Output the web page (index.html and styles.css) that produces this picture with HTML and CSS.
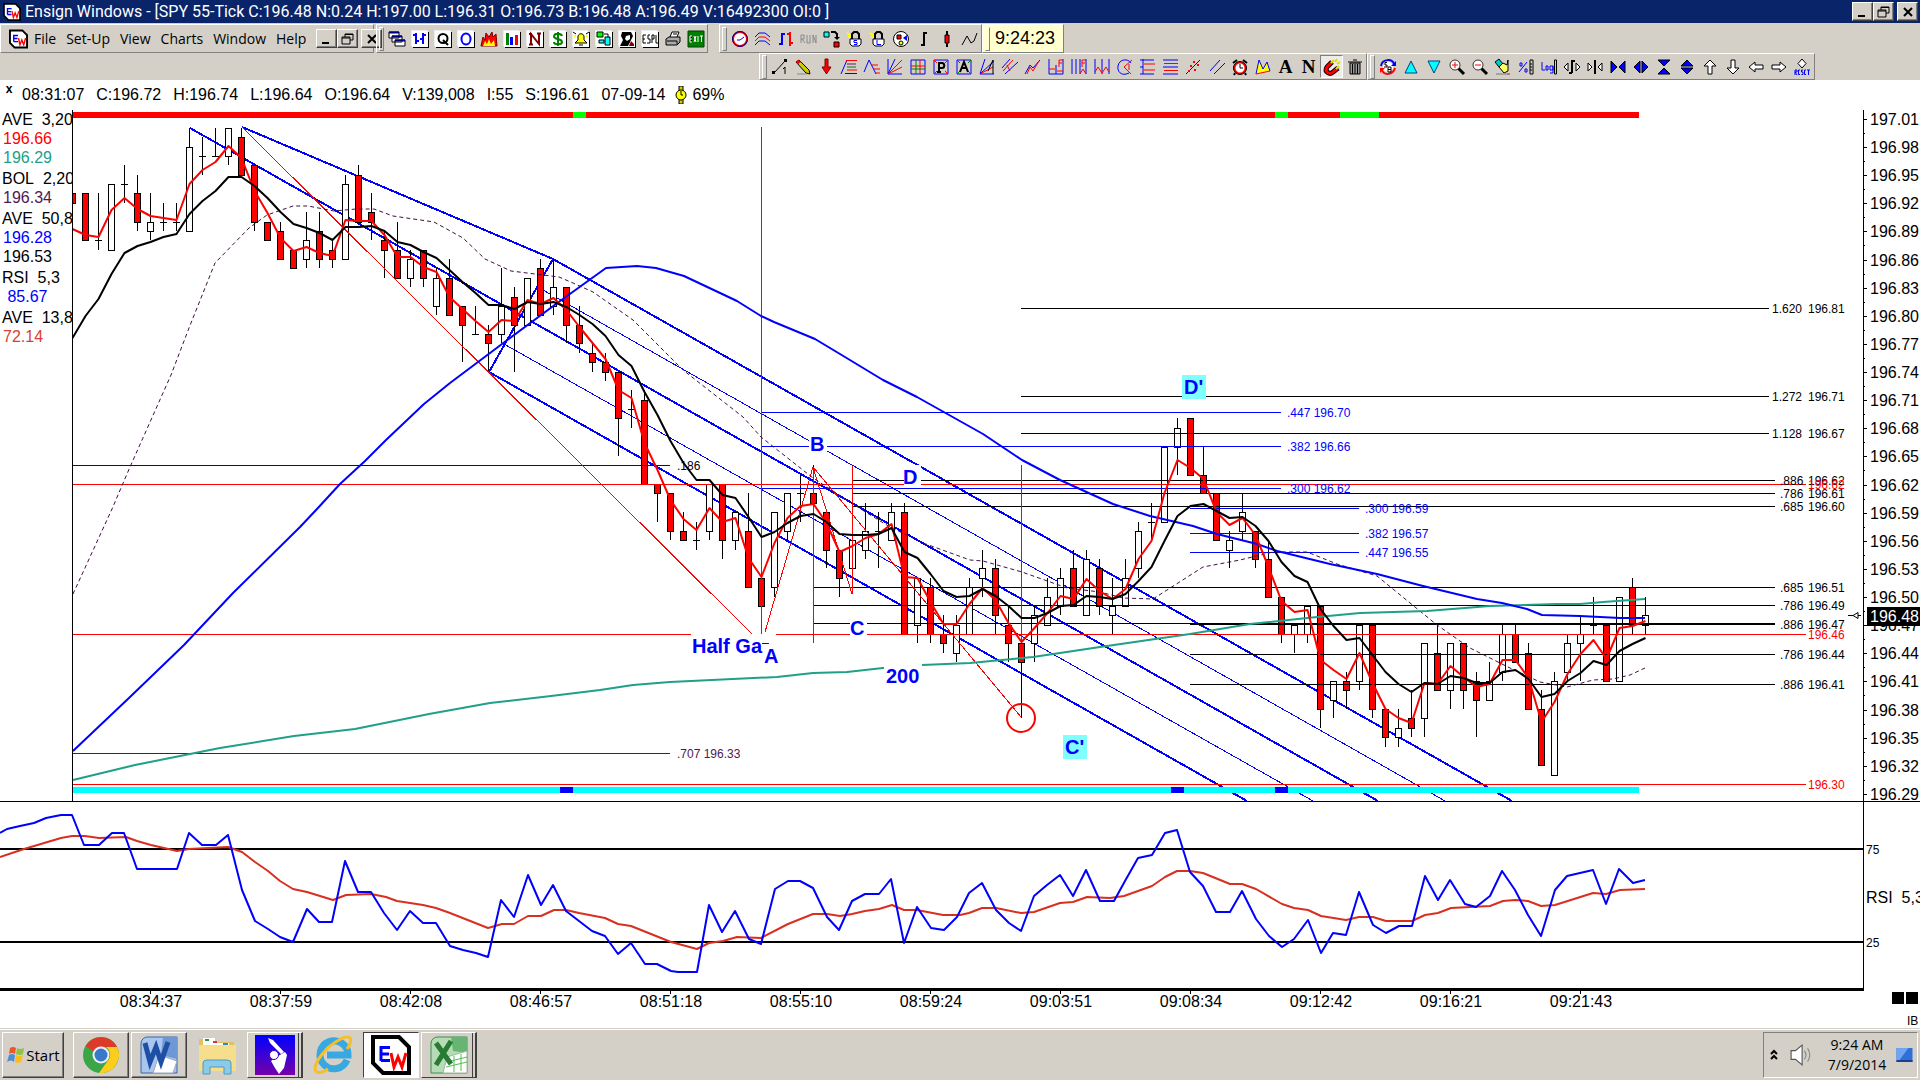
FILE: index.html
```html
<!DOCTYPE html>
<html lang="en">
<head>
<meta charset="utf-8">
<title>Ensign Windows</title>
<link rel="stylesheet" href="styles.css">
</head>
<body>
<svg class="defs" aria-hidden="true">
  <symbol id="ew" viewBox="0 0 40 40"><path d="M2 2H28L38 12V38H12L2 28Z" fill="#fff" stroke="#000" stroke-width="4"/><path d="M10 11V26M10 12.500H19M10 19H18M10 25.500H19" stroke="#00f" stroke-width="3" fill="none"/><path d="M20 18L23 32L27 22L31 32L35 18" stroke="#f00" stroke-width="3" fill="none"/></symbol>
</svg>

<header class="titlebar">
  <svg class="logo"><use href="#ew"/></svg>
  <h1>Ensign Windows - [SPY 55-Tick C:196.48 N:0.24 H:197.00 L:196.31 O:196.73 B:196.48 A:196.49 V:16492300 OI:0 ]</h1>
  <div class="winbtns">
    <button class="win" aria-label="Minimize"><svg viewBox="0 0 16 14"><path d="M3 11H10" class="k w2"/></svg></button>
    <button class="win" aria-label="Restore"><svg viewBox="0 0 16 14"><path d="M5 5V2H13V8H10M5 2.500H13M2 5H10V12H2ZM2 6H10" class="k"/></svg></button>
    <button class="win gap" aria-label="Close"><svg viewBox="0 0 16 14"><path d="M4 3L12 11M12 3L4 11" class="k w2"/></svg></button>
  </div>
</header>

<div class="bars">
  <div class="row top">
    <nav class="group menu">
      <svg class="logo"><use href="#ew"/></svg>
      <a href="#">File</a><a href="#">Set-Up</a><a href="#">View</a><a href="#">Charts</a><a href="#">Window</a><a href="#">Help</a>
      <div class="winbtns">
        <button class="win" aria-label="Minimize chart"><svg viewBox="0 0 16 14"><path d="M3 11H10" class="k w2"/></svg></button>
        <button class="win" aria-label="Restore chart"><svg viewBox="0 0 16 14"><path d="M5 5V2H13V8H10M5 2.500H13M2 5H10V12H2ZM2 6H10" class="k"/></svg></button>
        <button class="win gap" aria-label="Close chart"><svg viewBox="0 0 16 14"><path d="M4 3L12 11M12 3L4 11" class="k w2"/></svg></button>
      </div>
    </nav>
    <div class="group tools first">
      <button aria-label="Cascade"><svg viewBox="0 0 16 16"><path d="M0 1H10V7H0ZM3 5H13V11H3ZM6 9H16V15H6Z" fill="#fff" stroke="#000"/><path d="M0 1.500H10M3 5.500H13M6 9.500H16" stroke="#00007f" stroke-width="2"/></svg></button>
      <button class="tile" aria-label="Chart"><svg viewBox="0 0 16 16"><path d="M4 2V13M1 4H4M4 10H7M11 2V13M8 8H11M11 4H14" class="b w2"/></svg></button>
      <button class="tile" aria-label="Quote page"><svg viewBox="0 0 16 16"><circle cx="8" cy="7.500" r="4.500" class="k w2"/><path d="M8 9L13 14" class="k w2"/></svg></button>
      <button class="tile" aria-label="Option page"><svg viewBox="0 0 16 16"><ellipse cx="8" cy="8" rx="4.500" ry="5.500" class="b w2"/></svg></button>
      <button aria-label="Hot list"><svg viewBox="0 0 16 16"><path d="M0 15L2 6L4 9L5 2L8 6L11 1L12 6L15 3L16 15Z" fill="#f00" stroke="#7f0000"/><path d="M2 15L4 10L6 13L8 8L10 13L13 9L14 15Z" fill="#ff0"/></svg></button>
      <button class="tile" aria-label="Bars"><svg viewBox="0 0 16 16"><path d="M2 2H5V14H2Z" fill="#008000"/><path d="M6 6H9V14H6Z" fill="#00f"/><path d="M11 4H14V14H11Z" fill="#f00"/></svg></button>
      <button class="tile" aria-label="News"><svg viewBox="0 0 16 16"><path d="M4 14V3L12 13V2M2 3H5M10 2.500H14M2 13.500H6" stroke="#7f0000" stroke-width="2" fill="none"/></svg></button>
      <button class="tile" aria-label="Account"><svg viewBox="0 0 16 16"><path d="M12 5C11 2 4 2 4 5.500C4 9 12 7 12 11C12 14 4 14 4 11M8 1V15" stroke="#008000" stroke-width="2" fill="none"/></svg></button>
      <button class="tile" aria-label="Alerts"><svg viewBox="0 0 16 16"><path d="M2 12L5 9V5C6 2 10 2 11 5V9L14 12Z" fill="#ff0" stroke="#000"/><path d="M6 14H10M0 1L3 3M16 1L13 3" stroke="#000"/><path d="M1 5H3M13 5H15" stroke="#ff0" stroke-width="2"/></svg></button>
      <button class="tile" aria-label="Links"><svg viewBox="0 0 16 16"><path d="M1 1H7V6H1Z" fill="#0f0" stroke="#000"/><path d="M9 6H14V14H9ZM3 9H8V12H3Z" fill="#0ff" stroke="#000"/><path d="M8 3H12V6" class="k"/></svg></button>
      <button class="tile" aria-label="Support"><svg viewBox="0 0 16 16"><path d="M3 1H12L14 5L12 9L9 15H1L4 9L2 5Z" fill="#000"/><path d="M7 5L11 4L11 8L8 10L6 8Z" fill="#fff"/><path d="M10 15L12 10L15 13V15Z" fill="#800000"/></svg></button>
      <button class="tile" aria-label="ESPL"><svg viewBox="0 0 16 16"><path d="M4 4H1V12H4M1 8H3M8 4H6V8H8V12H5M10 12V4H12V8H10M14 4V12H16" class="k"/></svg></button>
      <button aria-label="Print"><svg viewBox="0 0 16 16"><path d="M5 6L7 1H14L12 6" fill="#fff" stroke="#000"/><path d="M1 8L4 6H15V11L12 14H1Z" fill="#aaa" stroke="#000"/><path d="M2 10H12V13M8 3H12" class="k"/></svg></button>
      <button aria-label="Exit"><svg viewBox="0 0 16 16"><path d="M0 0H16V16H0Z" fill="#008000" stroke="#004000"/><path d="M4 5H2V11H4M2 8H4M6 5L8 11M8 5L6 11M10 5V11M12 5H15M13.500 5V11" stroke="#fff"/></svg></button>
    </div>
    <div class="group tools second">
      <button aria-label="Session clock"><svg viewBox="0 0 16 16"><circle cx="8" cy="8" r="7" fill="#fff" stroke="#f00" stroke-width="2"/><circle cx="8" cy="8" r="7.500" class="dk"/><path d="M5 9H8L12 6" class="b"/></svg></button>
      <button aria-label="Bands"><svg viewBox="0 0 16 16"><path d="M0 6L4 2H10L15 6M0 14L4 10H10L15 14" class="b"/><path d="M0 10L4 6H10L15 10" class="r"/></svg></button>
      <button aria-label="Bars"><svg viewBox="0 0 16 16"><path d="M4 2V14M1 13H4M4 3H7" class="b w2"/><path d="M12 1V15M9 3H12M12 12H15" class="r w2"/></svg></button>
      <button aria-label="Run"><svg viewBox="0 0 16 16"><path d="M0 12V4H3V8H0M1 8L4 12M6 4V12H9V4M12 12V4L15 12V4" stroke="#888" fill="none"/></svg></button>
      <button aria-label="Swap"><svg viewBox="0 0 16 16"><path d="M0 1H5V6H0Z" fill="#0ff" stroke="#000"/><path d="M10 11H15V16H10Z" fill="#f00" stroke="#000"/><path d="M7 1H11L13 3V6" class="k w2"/><path d="M10 6H16L13 9Z"/></svg></button>
      <button aria-label="Lock S"><svg viewBox="0 0 16 16"><path d="M0 2L4 5M1 6H4" stroke="#ff0" stroke-width="2"/><path d="M5 8V3L7 1H10L12 3V8" class="k w2"/><path d="M3 8H14V13L12 15H5L3 13Z" fill="#fff" stroke="#000"/><path d="M10 9.500H7V11.500H10V13.500H7" class="b"/></svg></button>
      <button aria-label="Lock L"><svg viewBox="0 0 16 16"><path d="M0 2L4 5M1 6H4" stroke="#ff0" stroke-width="2"/><path d="M5 8V3L7 1H10L12 3V8" class="k w2"/><path d="M3 8H14V13L12 15H5L3 13Z" fill="#fff" stroke="#000"/><path d="M7 9V13.500H11" class="b"/></svg></button>
      <button aria-label="Shapes"><svg viewBox="0 0 16 16"><circle cx="8" cy="8" r="7.500" fill="#fff" stroke="#000"/><path d="M4 4H8V8H4Z" fill="#f00" stroke="#000"/><path d="M10 7L14 4V10Z" fill="#00f"/><circle cx="8" cy="12" r="2" fill="#ff0" stroke="#000"/></svg></button>
      <button aria-label="Bar style"><svg viewBox="0 0 16 16"><path d="M8 1V15M5 14H8M8 2H11" class="k w2"/></svg></button>
      <button aria-label="Candle style"><svg viewBox="0 0 16 16"><path d="M8 0V16" class="k w2"/><path d="M6 4H10V12H6Z" fill="#f00" stroke="#000"/></svg></button>
      <button aria-label="Line style"><svg viewBox="0 0 16 16"><path d="M0 14L5 5L9 12L12 10L15 2" class="k"/></svg></button>
    </div>
    <div class="group clock"><time>9:24:23</time></div>
  </div>
  <div class="row bottom">
    <div class="group tools draw">
      <button aria-label="Line"><svg viewBox="0 0 16 16"><path d="M2 14L13 2" class="k"/><path d="M0 12H3V15H0ZM12 0H15V3H12Z"/><path d="M11 10L13 8V15" class="k"/></svg></button>
      <button aria-label="Pencil"><svg viewBox="0 0 16 16"><path d="M1 3L4 1L14 11L15 15L11 14Z" fill="#cc0" stroke="#000"/><path d="M1 3L4 1L6 3L3 5Z" fill="#f00"/><path d="M2 15H12" stroke="#888"/></svg></button>
      <button aria-label="Arrow"><svg viewBox="0 0 16 16"><path d="M7 0H10V8H13L8.500 15L4 8H7Z" fill="#f00" stroke="#7f0000"/></svg></button>
      <button aria-label="Retracement"><svg viewBox="0 0 16 16"><path d="M0 15L6 1M4 14.500H16" class="b"/><path d="M5 1.500H16M6 11H16" class="r"/><path d="M6 5H15" stroke="#800080"/><path d="M6 8H15" stroke="#008000"/></svg></button>
      <button aria-label="Projection"><svg viewBox="0 0 16 16"><path d="M0 13L5 1L12 15" class="b"/><path d="M8 6H14M9 10H16M11 14H16" class="r"/></svg></button>
      <button aria-label="Fan"><svg viewBox="0 0 16 16"><path d="M1 0V15H15M1 15L8 0" class="b"/><path d="M1 15L15 1M1 15L15 8" class="r"/></svg></button>
      <button aria-label="Grid"><svg viewBox="0 0 16 16"><path d="M1 1H15V15H1Z" class="b"/><path d="M1 7H15M10 1V15" class="r"/><path d="M6 1V15M1 10H15" stroke="#008000"/></svg></button>
      <button aria-label="Pitchfork P"><svg viewBox="0 0 16 16"><path d="M1 1H15V15H1Z" class="b"/><path d="M1 1L4 4M12 12L15 15" class="r"/><path d="M15 1L12 4M1 15L4 12" stroke="#008000"/><path d="M6 13V4H9C12 4 12 9 9 9H6M4 13H8" class="k w2"/></svg></button>
      <button aria-label="Andrews A"><svg viewBox="0 0 16 16"><path d="M1 1H15V15H1Z" class="b"/><path d="M1 1L4 4M12 12L15 15" class="r"/><path d="M15 1L12 4M1 15L4 12" stroke="#008000"/><path d="M4 13L8 3L12 13M6 9H10" class="k w2"/></svg></button>
      <button aria-label="Gann"><svg viewBox="0 0 16 16"><path d="M1 15L6 0M1 15H15M1 15L15 2" class="b"/><path d="M1 15L14 8" class="r"/><path d="M9 12L14 1V15" class="k"/></svg></button>
      <button aria-label="Channels"><svg viewBox="0 0 16 16"><path d="M0 9L8 0M3 15L16 3" class="b"/><path d="M1 12L11 1M5 6L8 12" class="r"/></svg></button>
      <button aria-label="Zigzag"><svg viewBox="0 0 16 16"><path d="M0 15L5 6L8 9L15 1" class="b"/><path d="M2 15L5 8L8 12L14 2" class="r"/></svg></button>
      <button aria-label="Time F"><svg viewBox="0 0 16 16"><path d="M1 0V15M15 0V15M8 6V15M1 15H15" class="b"/><path d="M1 10H7M11 8V1H15M11 4H14M9 12H15" class="r"/></svg></button>
      <button aria-label="Cycles F"><svg viewBox="0 0 16 16"><path d="M1 0V15M5 0V15M9 0V15M15 0V15" class="b"/><path d="M11 8V1H15M11 4H14M9 15L12 10L15 15" class="r"/></svg></button>
      <button aria-label="Cycles"><svg viewBox="0 0 16 16"><path d="M1 0V15M8 0V15M15 0V15" class="b"/><path d="M1 13L4 8L8 14L12 8L15 13" class="r"/></svg></button>
      <button aria-label="Circle"><svg viewBox="0 0 16 16"><path d="M12 14C4 18 0 12 1 7C2 0 11 -1 14 4" class="b"/><path d="M15 1L7 8L14 15M12 5V11" class="r"/></svg></button>
      <button aria-label="Levels"><svg viewBox="0 0 16 16"><path d="M3 0V15M0 1H14M0 8H3M0 15H14" class="b"/><path d="M4 5H15M4 11H15" class="r"/></svg></button>
      <button aria-label="Horizontal lines"><svg viewBox="0 0 16 16"><path d="M0 1H15M0 8H15M0 15H15" class="b"/><path d="M1 4.500H15M1 11.500H15" class="r"/></svg></button>
      <button aria-label="Regression"><svg viewBox="0 0 16 16"><path d="M0 15L14 1" class="b"/><path d="M7 2H9V4H7ZM11 5H13V7H11ZM4 6H6V8H4ZM8 10H10V12H8ZM2 11H4V13H2Z" fill="#f00"/></svg></button>
      <button aria-label="Parallel"><svg viewBox="0 0 16 16"><path d="M1 12L11 1M5 15L16 4" class="b"/></svg></button>
      <button aria-label="Alarm"><svg viewBox="0 0 16 16"><path d="M1 4L5 1M15 4L11 1M3 14L2 16M13 14L14 16" class="k w2"/><circle cx="8" cy="9" r="5.500" fill="#fff" stroke="#f00" stroke-width="2"/><circle cx="8" cy="9" r="6.500" class="k"/><path d="M8 5V9H11" class="k"/></svg></button>
      <button aria-label="Pattern"><svg viewBox="0 0 16 16"><path d="M1 15L4 1L8 8L12 3L15 12Z" fill="#ff0"/><path d="M1 15L4 1L8 10L12 3L15 12" class="b"/><path d="M1 15L15 12" class="r"/></svg></button>
      <button class="letter" aria-label="Text">A</button>
      <button class="letter" aria-label="Note">N</button>
      <button class="pressed" aria-label="Magnet"><svg viewBox="0 0 16 16"><path d="M8 3L3 8C0 13 6 16 9 13L14 9" stroke="#000" stroke-width="5" fill="none"/><path d="M8 3L3 8C0 13 6 16 9 13L14 9" stroke="#f00" stroke-width="3" fill="none"/><path d="M10 1L7 4M15 7L12 10M13 0L11 3M16 3L13 5" stroke="#dd0" stroke-width="2"/></svg></button>
      <button aria-label="Trash"><svg viewBox="0 0 16 16"><path d="M3 4H13V15H3Z" fill="#999" stroke="#000"/><path d="M1 3H15M6 1H10M5.500 5V15M8 5V15M10.500 5V15" class="k"/></svg></button>
    </div>
    <div class="group tools view">
      <button aria-label="Swap symbols"><svg viewBox="0 0 16 16"><circle cx="8" cy="8" r="5" fill="#fff"/><path d="M1 7C2 0 12 -1 14 5" class="b w2"/><path d="M15 9C13 16 4 17 2 11" class="r w2"/><path d="M16 2V7H11Z" fill="#00f"/><path d="M0 14V9H5Z" fill="#f00"/><path d="M7 3.500H5V6H7V8H4M8 8V13H11V8ZM8 10.500H11" class="k"/></svg></button>
      <button aria-label="Up"><svg viewBox="0 0 16 16"><path d="M8 2L14 14H2Z" fill="#0ff" stroke="#004080"/></svg></button>
      <button aria-label="Down"><svg viewBox="0 0 16 16"><path d="M2 2H14L8 14Z" fill="#0ff" stroke="#004080"/></svg></button>
      <button aria-label="Zoom in"><svg viewBox="0 0 16 16"><path d="M9 9L15 15" class="k w3"/><circle cx="6" cy="6" r="5" fill="#fff" stroke="#333"/><path d="M3 6H9M6 3V9" class="r"/></svg></button>
      <button aria-label="Zoom out"><svg viewBox="0 0 16 16"><path d="M9 9L15 15" class="k w3"/><circle cx="6" cy="6" r="5" fill="#fff" stroke="#333"/><path d="M3 6H9" class="r"/></svg></button>
      <button aria-label="Clean"><svg viewBox="0 0 16 16"><path d="M0 3L4 0L8 5L4 8Z" fill="#0cc" stroke="#000"/><path d="M4 8L8 4L12 6L13 1V12L9 14Z" fill="#ff6" stroke="#000"/><path d="M1 15H12" stroke="#777"/><path d="M12 15H15" class="r"/></svg></button>
      <button aria-label="Percent scale"><svg viewBox="0 0 16 16"><path d="M1 13L9 3M2 4H4V7H2ZM7 10H9V13H7Z" class="b"/><path d="M12 1H15V15H12ZM12 5H14M12 8H14M12 11H14" class="k"/></svg></button>
      <button aria-label="Log scale"><svg viewBox="0 0 16 16"><path d="M1 3V11H4M5 7H7V11H5ZM12 7H9V11H12ZM12 7V14H9" class="b"/><path d="M13.500 1H15.500V15H13.500Z" class="k"/></svg></button>
      <button aria-label="Wider bars"><svg viewBox="0 0 16 16"><path d="M4 4V12L0 8ZM12 4V12L16 8Z" fill="#fff" stroke="#000"/><path d="M8 1V14M5 14H8M8 2H11" class="k w2"/></svg></button>
      <button aria-label="Narrower bars"><svg viewBox="0 0 16 16"><path d="M1 4V12L5 8ZM15 4V12L11 8Z" fill="#fff" stroke="#000"/><path d="M8 1V15" class="k w2"/></svg></button>
      <button aria-label="Compress"><svg viewBox="0 0 16 16"><path d="M1 2V14L7 8ZM15 2V14L9 8Z" fill="#00f" stroke="#000"/></svg></button>
      <button aria-label="Expand"><svg viewBox="0 0 16 16"><path d="M7 2V14L1 8ZM9 2V14L15 8Z" fill="#00f" stroke="#000"/></svg></button>
      <button aria-label="Compress vertical"><svg viewBox="0 0 16 16"><path d="M2 1H14L8 7ZM2 15H14L8 9Z" fill="#00f" stroke="#000"/></svg></button>
      <button aria-label="Expand vertical"><svg viewBox="0 0 16 16"><path d="M2 7H14L8 1ZM2 9H14L8 15Z" fill="#00f" stroke="#000"/></svg></button>
      <button aria-label="Shift up"><svg viewBox="0 0 16 16"><path d="M8 1L14 7H10V15H6V7H2Z" fill="#fff" stroke="#000"/></svg></button>
      <button aria-label="Shift down"><svg viewBox="0 0 16 16"><path d="M8 15L14 9H10V1H6V9H2Z" fill="#fff" stroke="#000"/></svg></button>
      <button aria-label="Shift left"><svg viewBox="0 0 16 16"><path d="M1 8L7 3V6H15V10H7V13Z" fill="#fff" stroke="#000"/></svg></button>
      <button aria-label="Shift right"><svg viewBox="0 0 16 16"><path d="M15 8L9 3V6H1V10H9V13Z" fill="#fff" stroke="#000"/></svg></button>
      <button aria-label="Reset"><svg viewBox="0 0 16 16"><path d="M8 0L12 4.500L8 9L4 4.500Z" fill="#fff" stroke="#000"/><path d="M1 16V11H3V13H1L3 16M6 11H4.500V15.500H6M9 11H7.500V13H9V15.500H7.500M12 11H10.500V15.500H12M13 11H16M14.500 11V16" class="b"/></svg></button>
    </div>
  </div>
</div>

<main>
  <div class="info">
    <button class="close" aria-label="Close panel">x</button>
    <span>08:31:07</span><span>C:196.72</span><span>H:196.74</span><span>L:196.64</span><span>O:196.64</span><span>V:139,008</span><span>I:55</span><span>S:196.61</span><span>07-09-14</span>
    <svg class="watch" viewBox="0 0 12 18"><path d="M4 0H8V18H4Z" fill="#cc0" stroke="#000"/><circle cx="6" cy="9" r="5" fill="#ff0" stroke="#000"/><path d="M6 5V9H8" class="k"/></svg>
    <span class="pct">69%</span>
  </div>
  <section class="price">
    <dl class="legend">
      <div><dt>AVE&nbsp; 3,20</dt><dd class="red">196.66</dd><dd class="teal">196.29</dd></div>
      <div><dt>BOL&nbsp; 2,20</dt><dd class="plum">196.34</dd></div>
      <div><dt>AVE&nbsp; 50,8</dt><dd class="blue">196.28</dd><dd>196.53</dd></div>
      <div><dt>RSI&nbsp; 5,3</dt><dd class="blue">&nbsp;85.67</dd></div>
      <div><dt>AVE&nbsp; 13,8</dt><dd class="rust">72.14</dd></div>
    </dl>
    <svg id="price" class="plot" viewBox="72 110 1848 691" role="img" aria-label="SPY 55-tick price chart"></svg>
  </section>
  <svg id="rsi" class="plot" viewBox="0 801 1920 227" role="img" aria-label="RSI chart"></svg>
</main>

<footer class="taskbar">
  <button class="start"><svg viewBox="0 0 20 20"><path d="M4 3Q7 1 10 3L9 9Q6 7 3 9Z" fill="#f0542c"/><path d="M11 3Q14 5 18 3L17 9Q13 11 10 9Z" fill="#8cc63f"/><path d="M3 10Q6 8 9 10L8 17Q5 14 1 17Z" fill="#4a90d9"/><path d="M10 10Q13 12 17 10L15 17Q12 19 9 17Z" fill="#fbbc1f"/></svg>Start</button>
  <button class="task raised" aria-label="Chrome"><svg viewBox="0 0 40 40"><circle cx="20" cy="20" r="18" fill="#3aa648"/><path d="M4.500 11A18 18 0 0 1 36 12H20A9 9 0 0 0 12 16Z" fill="#dd3a2a"/><path d="M36 12A18 18 0 0 1 18 38L28 24A9 9 0 0 0 25 12Z" fill="#fccd1a"/><circle cx="20" cy="20" r="8.500" fill="#eef"/><circle cx="20" cy="20" r="6.500" fill="#3a78c9"/></svg></button>
  <button class="task raised" aria-label="Word"><svg viewBox="0 0 40 40"><path d="M2 8Q3 2 9 2H38V38H2Z" fill="#a9c6ee" stroke="#3b67aa"/><path d="M24 2H38V24L22 20Z" fill="#6e97d6"/><path d="M20 20L38 26L34 38H14Z" fill="#fff" stroke="#9ab"/><path d="M6 8L11 27L17 12L22 27L29 7" stroke="#1f4fa5" stroke-width="5" fill="none"/></svg></button>
  <button class="task" aria-label="Explorer"><svg viewBox="0 0 40 40"><path d="M2 4H14L16 7H37V36H2Z" fill="#e2c25c"/><path d="M6 3H18V8H32V12H6Z" fill="#fff"/><path d="M2 10H39V36H2Z" fill="#f5df8c"/><path d="M8 4H12V6H8Z" fill="#2a9a3a"/><path d="M16 6H20V8H16Z" fill="#d33"/><path d="M26 8H31V10H26Z" fill="#38c"/><path d="M6 39V28Q6 25 10 25H30Q34 25 34 28V39H27V32H13V39Z" fill="#8ccbe8" stroke="#4a9cc4"/></svg></button>
  <button class="task raised stack" aria-label="Wizard"><svg viewBox="0 0 40 40"><defs><linearGradient id="vio" x2="0" y2="1"><stop stop-color="#00f"/><stop offset="1" stop-color="#70a"/></linearGradient></defs><path d="M0 0H40V40H0Z" fill="url(#vio)"/><path d="M13 3L18 5L29 17L26 19L15 8ZM16 26L23 21L30 17L32 20L29 33L24 39L20 33Z" fill="#fff"/><circle cx="19" cy="20" r="4.500" fill="#fff" stroke="#30c"/></svg></button>
  <button class="task" aria-label="Internet Explorer"><svg viewBox="0 0 40 40"><path d="M34 25A14 14 0 1 1 35 20H14" stroke="#38a9e0" stroke-width="7" fill="none"/><path d="M34 14C42 2 36 -1 26 5C14 11 2 26 2 34C3 41 12 36 15 34" stroke="#f6bf26" stroke-width="3" fill="none"/></svg></button>
  <button class="task active" aria-label="Ensign"><svg><use href="#ew"/></svg></button>
  <button class="task raised stack" aria-label="Excel"><svg viewBox="0 0 40 40"><path d="M2 8Q3 2 9 2H38V38H2Z" fill="#b5dcb5" stroke="#3d8f4d"/><path d="M22 2H38V18L24 16Z" fill="#67b572"/><path d="M18 22L38 16V38H14Z" fill="#fff" stroke="#9b9"/><path d="M18 27L38 22M17 32L38 27M25 21V37M32 19V36" stroke="#5b5"/><path d="M7 8L22 29M22 6L7 30" stroke="#287a35" stroke-width="5"/></svg></button>
  <div class="tray">
    <button class="chev" aria-label="Show hidden icons"><svg viewBox="0 0 8 12"><path d="M1 5L4 2L7 5M1 10L4 7L7 10" class="k w2"/></svg></button>
    <svg class="spk" viewBox="0 0 20 20"><path d="M1 6H5L11 1V19L5 14H1Z" fill="#fff" stroke="#555"/><path d="M13 6Q16 10 13 14M16 4Q20 10 16 16" fill="none" stroke="#888"/></svg>
    <time>9:24 AM<br>7/9/2014</time>
    <svg class="desk" viewBox="0 0 16 16"><path d="M0 1H16V15H0Z" fill="#2f6fd8"/><path d="M0 1H12L3 13H0Z" fill="#6ea4f0"/><path d="M0 13H16V15H0Z" fill="#1c3f90"/></svg>
  </div>
</footer>
<script src="chart.js"></script>
</body>
</html>
```
FILE: styles.css
```css
* { box-sizing: border-box; }
body {
  margin: 0;
  min-height: 100vh;
  display: flex;
  flex-direction: column;
  background: #fff;
  color: #000;
  font-family: "Liberation Sans", Arial, sans-serif;
  font-size: 16px;
  overflow-x: hidden;
}
h1, dl, dd { margin: 0; font-weight: normal; }
button { font: inherit; color: inherit; margin: 0; padding: 0; border: 0; background: none; }
.defs { position: absolute; width: 0; height: 0; }
.k, .b, .r, .dk { fill: none; stroke: #000; }
.b { stroke: #00f; }
.r { stroke: #f00; }
.dk { stroke: #00007f; }
.w2 { stroke-width: 2; }
.w3 { stroke-width: 3; }

.titlebar {
  display: flex;
  align-items: center;
  height: 23px;
  padding: 0 2px 0 3px;
  background: #0a246a;
  color: #fff;
}
.titlebar h1 { margin-left: 4px; flex: 1; font: 16px/22px Roboto, sans-serif; white-space: nowrap; }
.logo { width: 18px; height: 20px; flex: none; }
.winbtns { display: flex; align-items: center; flex: none; }
.win {
  display: flex;
  align-items: center;
  justify-content: center;
  width: 21px;
  height: 19px;
  background: #d4d0c8;
  border: 1px solid;
  border-color: #fff #404040 #404040 #fff;
  box-shadow: inset -1px -1px #808080;
}
.win svg { width: 16px; height: 14px; }
.win.gap { margin-left: 3px; }

.bars { background: #d4d0c8; height: 57px; }
.row { display: flex; }
.top { height: 30px; padding-top: 1px; }
.bottom { height: 27px; justify-content: flex-end; padding-right: 105px; }
.group {
  display: flex;
  flex: none;
  align-items: center;
  border: 1px solid;
  border-color: #fff #808080 #808080 #fff;
}
.menu { width: 374px; gap: 10px; padding-left: 8px; font: 14px/20px "Open Sans", sans-serif; white-space: nowrap; }
.menu a { color: #000; text-decoration: none; }
.menu .logo { height: 20px; width: 19px; margin-right: -4px; }
.menu .winbtns { margin-left: auto; }
.tools::before, .clock::before {
  content: "";
  width: 3px;
  height: 22px;
  margin: 0 1px 0 2px;
  border: 1px solid;
  border-color: #fff #808080 #808080 #fff;
}
.clock::before { margin-right: 5px; }
.tools button { width: 23px; height: 23px; display: flex; align-items: center; justify-content: center; }
.tools svg { width: 16px; height: 16px; overflow: visible; }
.first { margin-left: 2px; width: 332px; }
.second { margin-left: 11px; width: 263px; }
.tile svg { background: #fff; box-shadow: 1px 1px #000, -1px -1px #eee; }
.clock { width: 82px; background: #ffffd0; font-size: 18px; }
.draw { width: 608px; }
.view { width: 448px; }
.tools .letter { font: bold 19px/20px "Liberation Serif", serif; }
.tools .pressed { background: #eeece8; border: 1px solid; border-color: #808080 #fff #fff #808080; }

main { flex: 1; }
.info { display: flex; align-items: center; height: 30px; gap: 12px; line-height: 30px; }
.close { width: 10px; margin: 0 0 12px 4px; font: bold 12px/12px "Liberation Sans", sans-serif; }
.info .close + span { margin-left: -4px; }
.watch { width: 12px; height: 18px; margin-left: -2px; }
.pct { margin-left: -7px; }
.price { display: flex; align-items: flex-start; }
.legend { width: 72px; flex: none; overflow: hidden; line-height: 19px; padding-left: 2px; white-space: nowrap; }
.legend div { margin-bottom: 2px; }
.legend dd { padding-left: 1px; }
.red { color: #f00; }
.teal { color: #20a088; }
.plum { color: #501850; }
.blue { color: #00f; }
.rust { color: #d84030; }
.plot { display: block; flex: 1; min-width: 0; width: 100%; }
.plot .px { shape-rendering: crispEdges; }
.plot text { font-size: 16px; }
.plot .sm { font-size: 12px; }
.plot .tag { font-size: 20px; font-weight: bold; fill: #00f; }
.plot .mid { text-anchor: middle; }
.plot polyline { fill: none; stroke-width: 2; stroke-linejoin: round; }

.taskbar {
  display: flex;
  align-items: center;
  height: 52px;
  padding: 0 2px;
  background: #d4d0c8;
  border-top: 1px solid #d4d0c8;
  box-shadow: inset 0 1px #fff;
}
.start, .task { height: 46px; display: flex; align-items: center; justify-content: center; }
.start, .raised {
  border: 1px solid;
  border-color: #fff #404040 #404040 #fff;
  box-shadow: inset -1px -1px #808080;
}
.start { width: 62px; margin-right: 9px; font: 15px/20px "Open Sans", sans-serif; }
.start svg { width: 20px; height: 22px; }
.task { width: 56px; margin-right: 2px; }
.task svg { width: 40px; height: 40px; }
.active { background: #fff; border: 1px solid; border-color: #404040 #fff #fff #404040; }
.stack { border-right: 2px solid #404040; box-shadow: inset -2px 0 #d4d0c8, inset -3px 0 #404040; }
.tray {
  display: flex;
  align-items: center;
  width: 155px;
  height: 46px;
  margin-left: auto;
  padding-left: 6px;
  border: 1px solid;
  border-color: #808080 #fff #fff #808080;
}
.tray time { width: 72px; margin-left: 9px; text-align: center; font: 14px/20px "Open Sans", sans-serif; }
.chev svg { width: 8px; height: 12px; display: block; }
.spk { width: 22px; height: 22px; margin-left: 12px; }
.desk { width: 17px; height: 16px; margin-left: 3px; }
```
FILE: chart.js
```js
const NS = 'http://www.w3.org/2000/svg';
const priceSvg = document.getElementById('price');
const rsiSvg = document.getElementById('rsi');

function add(svg, name, attrs, text) {
  const el = document.createElementNS(NS, name);
  for (const key in attrs) el.setAttribute(key, attrs[key]);
  if (text) el.textContent = text;
  svg.appendChild(el);
}
const barX = i => 72 + 13 * i;
const centY = c => 484.5 - (c - 62) * 9.375;
const rule = (svg, x1, x2, y, stroke, w = 1) =>
  add(svg, 'line', { x1, x2, y1: y + 0.5, y2: y + 0.5, stroke, 'stroke-width': w, class: 'px' });
const vert = (svg, x, y1, y2, stroke) =>
  add(svg, 'line', { x1: x + 0.5, x2: x + 0.5, y1, y2, stroke, class: 'px' });
const seg = (x1, y1, x2, y2, stroke, w = 1) =>
  add(priceSvg, 'line', { x1, y1, x2, y2, stroke, 'stroke-width': w, class: 'px' });
const box = (svg, x, y, width, height, fill) =>
  add(svg, 'rect', { x, y, width, height, fill, class: 'px' });
const poly = (svg, pts, stroke, extra) =>
  add(svg, 'polyline', Object.assign({ points: pts, stroke }, extra));
const byBar = ys => ys.map((y, i) => barX(i) + 0.5 + ',' + y).join(' ');

// trend channels
const B = '#00f', K = '#000', R = '#f00';
seg(190, 128, 1378, 801, B, 2);
seg(242, 127, 553, 259, B, 2);
seg(553, 259, 1512, 801, B, 2);
seg(489, 372, 1247, 801, B, 2);
seg(489, 372, 553, 259, B, 2);
seg(504, 344, 1313, 801, B);
seg(543, 290, 1445, 801, B);

// candles: colour, body top, body bottom, high, low (cents above 196)
const candles = `R 93 92 93 92|R 93 88 93 88|D 88 88 93 87|W 94 87 94 87|D 94 94 96 92|R 93 90 95 89|W 90 89 93 88|D 90 90 92 89|D 90 90 92 89|W 98 89 100 89
D 97 97 99 95|D 97 97 100 97|W 100 97 100 96|R 99 95 100 95|R 96 90 96 89|R 90 88 90 88|R 89 86 90 86|R 87 85 87 85|W 88 86 91 85|R 89 86 91 85
R 87 86 88 85|W 94 86 95 86|R 95 90 96 90|R 91 90 93 88|R 88 87 89 84|R 87 84 90 84|W 86 84 87 83|R 87 84 87 83|W 84 81 85 80|R 84 80 86 80
R 81 79 81 75|D 78 78 81 78|R 78 77 79 74|W 81 78 85 77|R 82 79 83 74|W 84 79 84 79|R 85 80 86 80|W 83 81 86 80|R 83 79 83 77|R 79 77 81 76
R 76 75 77 74|R 75 74 76 73|R 74 69 74 65|D 70 70 72 68|R 71 62 72 62|R 62 61 62 58|R 61 57 61 56|R 57 56 59 56|D 56 56 58 55|W 62 57 62 56
R 62 56 62 54|W 59 56 59 55|R 57 51 61 51|R 52 49 53 46|W 59 51 59 50|W 61 57 61 56|D 61 61 63 58|R 61 60 64 59|R 59 55 59 53|R 55 52 55 50
W 56 53 58 52|W 57 55 60 54|D 57 57 59 53|W 59 56 60 56|R 59 46 60 46|W 52 47 52 45|R 51 46 52 45|R 46 45 48 44|W 47 44 48 43|W 51 46 52 46
W 53 52 55 50|R 53 48 54 46|R 47 45 49 43|R 45 43 46 37|W 48 45 49 43|W 50 47 52 47|W 52 49 53 48|R 53 49 55 49|W 54 48 55 48|R 53 49 54 48
W 49 48 52 46|W 52 49 54 49|W 57 53 58 52|D 58 58 60 56|W 66 58 66 58|W 68 66 69 63|R 69 63 69 63|R 63 61 66 61|R 61 56 61 56|W 56 55 57 53
W 59 57 61 56|R 57 54 57 53|R 54 50 56 50|R 50 46 50 45|W 47 46 47 44|W 49 46 49 45|R 49 38 49 36|W 41 39 41 37|R 41 40 42 38|W 47 41 47 40
R 47 38 47 37|R 38 35 38 34|W 36 35 38 34|R 37 36 40 35|W 45 37 45 35|R 44 40 47 40|W 45 40 45 38|R 45 40 45 38|R 41 39 42 35|W 41 39 43 39
W 46 42 47 41|R 46 43 47 43|R 44 38 45 38|R 38 32 40 32|W 41 31 42 31|W 45 42 46 41|W 46 45 48 41|D 47 47 50 46|R 47 41 47 41|W 50 41 50 41
R 51 47 52 46|W 48 47 50 46`.split(/[|\n]/);
candles.forEach((row, i) => {
  const [kind, ...n] = row.split(' ');
  const [top, bottom, high, low] = n.map(v => Math.round(centY(+v) - 0.5));
  const x = barX(i);
  vert(priceSvg, x, high, low, K);
  if (kind === 'D') rule(priceSvg, x - 3, x + 4, top, K);
  else add(priceSvg, 'rect', { x: x - 2.5, y: top + 0.5, width: 6, height: bottom - top, fill: kind === 'R' ? R : '#fff', stroke: K, class: 'px' });
});

// horizontal levels
[484, 634, 784].forEach(y => rule(priceSvg, 73, 1806, y, R));
rule(priceSvg, 73, 670, 465, '#201020');
rule(priceSvg, 73, 670, 753, '#501850');
[412, 446, 488].forEach(y => rule(priceSvg, 762, 1281, y, B));
[508, 533, 552].forEach(y => rule(priceSvg, 1190, 1359, y, B));
[308, 396, 433].forEach(y => rule(priceSvg, 1021, 1769, y, K));
[480, 493, 506].forEach(y => rule(priceSvg, 852, 1775, y, K));
[587, 605, 623].forEach(y => rule(priceSvg, 813, 1775, y, K));
[624, 654, 684].forEach(y => rule(priceSvg, 1190, 1775, y, K));

// pattern legs
vert(priceSvg, 761, 127, 634, R);
vert(priceSvg, 813, 467, 643, R);
vert(priceSvg, 852, 466, 594, R);
vert(priceSvg, 1021, 465, 642, R);
seg(242, 127, 761, 643, R);
seg(765, 632, 813, 467, R);
seg(813, 467, 852, 594, R);
seg(813, 467, 1021, 717, R);
add(priceSvg, 'circle', { cx: 1021, cy: 718, r: 14, fill: 'none', stroke: R, 'stroke-width': 2 });

// indicators
poly(priceSvg, '73,594 112,509 130,467 171,375 189,328 215,263 249,228 267,215 293,206 308,206 334,211 356,209 374,209 393,216 434,222 463,238 485,259 511,271 559,277 573,283 593,292 633,320 683,370 743,417 761,437 813,478 867,513 890,527 923,543 970,560 983,561 1022,572 1067,588 1100,592 1123,598 1153,599 1203,567 1240,560 1273,552 1307,552 1337,564 1377,576 1437,625 1470,648 1510,668 1540,682 1567,687 1593,680 1613,679 1630,675 1645,668', '#401040', { 'stroke-dasharray': '4 3', style: 'stroke-width:1' });
poly(priceSvg, '73,780 135,765 220,748 294,736 355,729 429,714 490,703 551,696 600,690 633,685 670,682 777,677 813,673 847,672 883,668 922,665 970,663 1033,657 1060,653 1100,647 1190,634 1250,624 1307,618 1360,613 1427,611 1490,606 1557,604 1580,604 1603,602 1645,599', '#20a088');
poly(priceSvg, '73,751 130,697 184,645 233,593 300,527 317,509 340,484 365,461 386,440 424,404 450,383 502,344 556,304 606,268 637,266 656,268 684,276 737,301 761,316 774,322 815,339 840,354 883,380 917,397 983,434 1022,460 1060,480 1113,504 1150,516 1193,526 1217,534 1257,544 1277,551 1330,564 1377,574 1423,586 1477,599 1502,603 1527,609 1542,615 1580,616 1620,618 1645,618', B);
poly(priceSvg, byBar([229,235,237,210,198,209,216,218,220,184,170,162,146,158,191,213,238,251,247,253,256,220,221,221,235,257,257,267,272,297,309,321,332,320,321,300,304,298,310,327,343,359,390,398,443,470,500,519,530,508,522,518,558,577,543,518,506,504,523,552,546,538,534,524,577,578,602,624,624,604,588,600,623,642,628,613,596,599,579,591,599,589,559,541,493,460,468,479,512,525,518,535,567,601,612,610,660,670,679,653,683,709,718,723,683,684,666,677,687,684,660,660,678,722,702,674,654,640,659,628,626,621]), R);
poly(priceSvg, byBar([338,316,299,274,253,246,242,237,234,214,201,191,177,177,186,198,212,224,228,233,240,227,227,226,231,242,245,252,258,270,282,293,305,305,309,302,304,302,307,315,324,336,355,366,392,415,441,463,480,480,495,498,517,537,532,523,516,514,522,534,535,535,534,528,552,558,574,591,597,596,589,596,606,618,618,613,606,605,596,597,599,594,581,567,541,516,506,504,511,518,517,526,541,562,576,582,609,626,640,638,655,672,684,692,683,684,676,678,683,683,672,670,679,697,694,681,673,661,665,651,644,638]), K);

// signal strips
box(priceSvg, 73, 112, 1566, 6, R);
[[573, 13], [1275, 13], [1340, 39]].forEach(([x, w]) => box(priceSvg, x, 112, w, 6, '#0f0'));
box(priceSvg, 73, 787, 1566, 6, '#0ff');
[[560, 13], [1171, 13], [1275, 13]].forEach(([x, w]) => box(priceSvg, x, 787, w, 6, B));

// level labels
const small = (x, y, t, fill = K) => add(priceSvg, 'text', { x, y: y + 5, fill, class: 'sm' }, t);
small(1772, 308, '1.620'); small(1808, 308, '196.81');
small(1772, 396, '1.272'); small(1808, 396, '196.71');
small(1772, 433, '1.128'); small(1808, 433, '196.67');
[[480, '.886', '196.62'], [493, '.786', '196.61'], [506, '.685', '196.60'], [587, '.685', '196.51'], [605, '.786', '196.49'], [624, '.886', '196.47'], [654, '.786', '196.44'], [684, '.886', '196.41']]
  .forEach(([y, a, b]) => { small(1780, y, a); small(1808, y, b); });
[[484, '196.62'], [634, '196.46'], [784, '196.30']].forEach(([y, t]) => small(1808, y, t, R));
[[412, '.447 196.70'], [446, '.382 196.66'], [488, '.300 196.62']].forEach(([y, t]) => small(1287, y, t, B));
[[508, '.300 196.59'], [533, '.382 196.57'], [552, '.447 196.55']].forEach(([y, t]) => small(1365, y, t, B));
small(677, 465, '.186');
small(677, 753, '.707 196.33', '#501850');

// annotations
[[809, 437, 18, 15], [904, 465, 17, 23], [850, 616, 17, 24], [691, 634, 85, 32], [884, 664, 38, 24]].forEach(([x, y, w, h]) => box(priceSvg, x, y, w, h, '#fff'));
box(priceSvg, 1063, 735, 24, 24, '#80ffff');
box(priceSvg, 1182, 375, 24, 24, '#80ffff');
[[810, 451, 'B'], [903, 484, 'D'], [850, 635, 'C'], [764, 663, 'A'], [692, 653, 'Half Ga'], [886, 683, '200'], [1065, 754, "C'"], [1184, 394, "D'"]]
  .forEach(([x, y, t]) => add(priceSvg, 'text', { x, y, class: 'tag' }, t));
rule(priceSvg, 762, 769, 643, B);

// price axis
vert(priceSvg, 72, 110, 801, K);
vert(priceSvg, 1863, 110, 801, K);
for (let c = 101; c >= 29; c -= 3) {
  const y = Math.round(centY(c));
  rule(priceSvg, 1863, 1867, y, K);
  if (c > 29) rule(priceSvg, 1863, 1865, y + 14, K);
  add(priceSvg, 'text', { x: 1870, y: y + 6 }, (196 + c / 100).toFixed(2));
}
box(priceSvg, 1867, 607, 53, 19, K);
add(priceSvg, 'text', { x: 1870, y: 622, fill: '#fff' }, '196.48');
add(priceSvg, 'path', { d: 'M1848 615.5H1853L1858 612.5V618.5L1853 615.5M1858 615.5H1861', fill: 'none', stroke: K });

// RSI pane
rule(rsiSvg, 0, 1920, 801, K);
rule(rsiSvg, 0, 1863, 848, K, 2);
rule(rsiSvg, 0, 1863, 941, K, 2);
rule(rsiSvg, 0, 1863, 989, K, 3);
vert(rsiSvg, 1863, 801, 991, K);
poly(rsiSvg, '0,857 24,849 61,838 72,836 85,836 99,838 126,837 137,841 151,845 177,851 189,849 228,847 242,852 255,862 268,871 280,881 293,889 307,892 333,900 346,895 371,894 386,897 397,901 423,905 436,908 450,913 488,928 502,924 514,924 528,916 541,916 554,910 566,910 579,913 605,918 618,924 631,926 671,942 697,949 709,943 723,941 737,937 761,938 788,924 813,914 827,914 840,916 852,914 865,911 879,909 892,905 904,910 917,910 943,915 960,915 969,913 982,908 996,908 1021,913 1034,912 1060,903 1073,902 1087,897 1110,898 1124,896 1152,886 1165,877 1177,871 1190,871 1203,873 1230,884 1242,884 1256,889 1282,904 1294,908 1308,910 1321,916 1346,920 1359,917 1373,917 1386,921 1412,921 1425,915 1438,913 1451,908 1490,906 1503,901 1515,900 1528,901 1541,906 1555,905 1593,893 1606,894 1620,890 1645,889', '#d83020');
const rsi = `0,128 12,118 33,109 55,100 75,85 99,75 118,75 138,164 161,164 183,128 203,128 224,236 289,236 309,130 330,164 352,164 373,135 395,300 416,392 437,417 458,441 479,457 501,358 521,396 543,396 564,214 585,306 606,306 628,368 649,420 670,362 691,399 712,399 735,467 756,479 777,490 797,501 819,331 840,381 862,254 883,346 903,285 925,362 946,393 967,424 988,438 1010,493 1031,458 1053,521 1073,522 1096,542 1108,546 1138,546 1158,344 1180,427 1201,362 1223,448 1243,462 1265,298 1287,272 1307,272 1328,294 1350,382 1371,419 1392,334 1413,312 1436,312 1456,266 1477,459 1498,352 1520,413 1542,420 1563,380 1583,308 1604,278 1626,360 1648,400 1668,423 1689,319 1710,286 1732,254 1753,318 1774,239 1796,332 1819,332 1838,272 1859,205 1881,194 1902,128 1923,119 1944,245 1965,288 1986,366 2009,366 2029,302 2051,388 2072,438 2094,471 2114,447 2136,389 2157,490 2178,428 2199,435 2220,305 2242,406 2263,430 2285,408 2306,408 2327,257 2348,331 2369,269 2392,342 2411,351 2433,317 2454,244 2475,300 2496,375 2517,438 2539,300 2560,259 2581,250 2602,239 2623,343 2645,236 2667,279 2686,269`;
poly(rsiSvg, rsi.split(' ').map(p => { const [x, y] = p.split(','); return Math.round(x / 1.6333) + ',' + Math.round(790 + y / 3); }).join(' '), B);
['08:34:37', '08:37:59', '08:42:08', '08:46:57', '08:51:18', '08:55:10', '08:59:24', '09:03:51', '09:08:34', '09:12:42', '09:16:21', '09:21:43'].forEach((t, i) => {
  vert(rsiSvg, 150 + 130 * i, 991, 994, K);
  add(rsiSvg, 'text', { x: 151 + 130 * i, y: 1007, class: 'mid' }, t);
});
add(rsiSvg, 'text', { x: 1866, y: 854, class: 'sm' }, '75');
add(rsiSvg, 'text', { x: 1866, y: 947, class: 'sm' }, '25');
add(rsiSvg, 'text', { x: 1866, y: 903 }, 'RSI\u00a0 5,3');
box(rsiSvg, 1892, 992, 12, 12, K);
box(rsiSvg, 1906, 992, 12, 12, K);
add(rsiSvg, 'text', { x: 1907, y: 1025, class: 'sm' }, 'IB');
```
